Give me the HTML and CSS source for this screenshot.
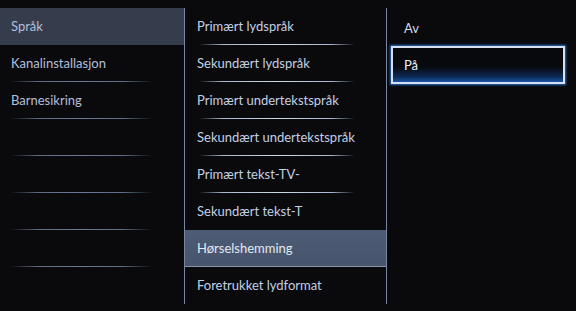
FILE: index.html
```html
<!DOCTYPE html>
<html lang="no">
<head>
<meta charset="utf-8">
<link rel="stylesheet" href="styles.css">
</head>
<body>
<div class="menu">
  <div class="col col-left">
    <div class="row sel">Språk</div>
    <div class="row">Kanalinstallasjon</div>
    <div class="row">Barnesikring</div>
    <div class="row"></div>
    <div class="row"></div>
    <div class="row"></div>
    <div class="row"></div>
    <div class="row last"></div>
  </div>
  <div class="col col-mid">
    <div class="row">Primært lydspråk</div>
    <div class="row">Sekundært lydspråk</div>
    <div class="row">Primært undertekstspråk</div>
    <div class="row">Sekundært undertekstspråk</div>
    <div class="row">Primært tekst-TV-</div>
    <div class="row pre">Sekundært tekst-T</div>
    <div class="row sel">Hørselshemming</div>
    <div class="row last">Foretrukket lydformat</div>
  </div>
  <div class="col col-right">
    <div class="opt">Av</div>
    <div class="opt focus">På</div>
  </div>
</div>
</body>
</html>
```
FILE: styles.css
```css
html, body {
  margin: 0;
  padding: 0;
  background: #0a0a0c;
  width: 576px;
  height: 311px;
  overflow: hidden;
}
.menu {
  display: flex;
  padding-top: 8px;
  font-family: "Lato", "Open Sans", sans-serif;
  font-size: 13px;
  color: #c3cfe4;
}
.col {
  display: flex;
  flex-direction: column;
}
.col-left {
  width: 184px;
  border-right: 1px solid #7a87a3;
  color: #b1bfdc;
}
.col-mid {
  width: 201px;
  border-right: 1px solid #7a87a3;
}
.col-right {
  flex: 1;
  padding: 2px 11px 0 4px;
}
.row {
  height: 37px;
  line-height: 37px;
  box-sizing: border-box;
  background-repeat: no-repeat;
}
.col-left .row {
  padding-left: 11px;
  background-image: linear-gradient(90deg, rgba(90,105,130,0), #5e6c86 20%, #6c7a95 50%, #5e6c86 80%, rgba(90,105,130,0));
  background-size: 142px 1px;
  background-position: 10px 36px;
}
.col-mid .row {
  padding-left: 12px;
  background-image: linear-gradient(90deg, rgba(150,165,195,0), #a8b6d0 15%, #d0d9e8 50%, #a8b6d0 85%, rgba(150,165,195,0));
  background-size: 156px 1px;
  background-position: 14px 36px;
}
.col .row.last,
.col .row.pre {
  background-image: none;
}
.col-left .row.sel {
  background: #353c4b;
}
.col-mid .row.sel {
  background: linear-gradient(#4d5b74, #46546c);
  box-shadow: inset 0 -1px 0 #8795ae;
  color: #e2e9f4;
}
.opt {
  height: 36px;
  line-height: 36px;
  padding-left: 13px;
  color: #cfd9ea;
}
.opt.focus {
  height: 38px;
  line-height: 34px;
  box-sizing: border-box;
  padding-left: 11px;
  color: #eef2f8;
  border: 2px solid #d6e0f0;
  box-shadow: 0 0 2px 1px #2a6cc8;
  background: linear-gradient(#08090c 0%, #08090d 55%, #0d2a55 85%, #1a55a8 100%);
}
```
